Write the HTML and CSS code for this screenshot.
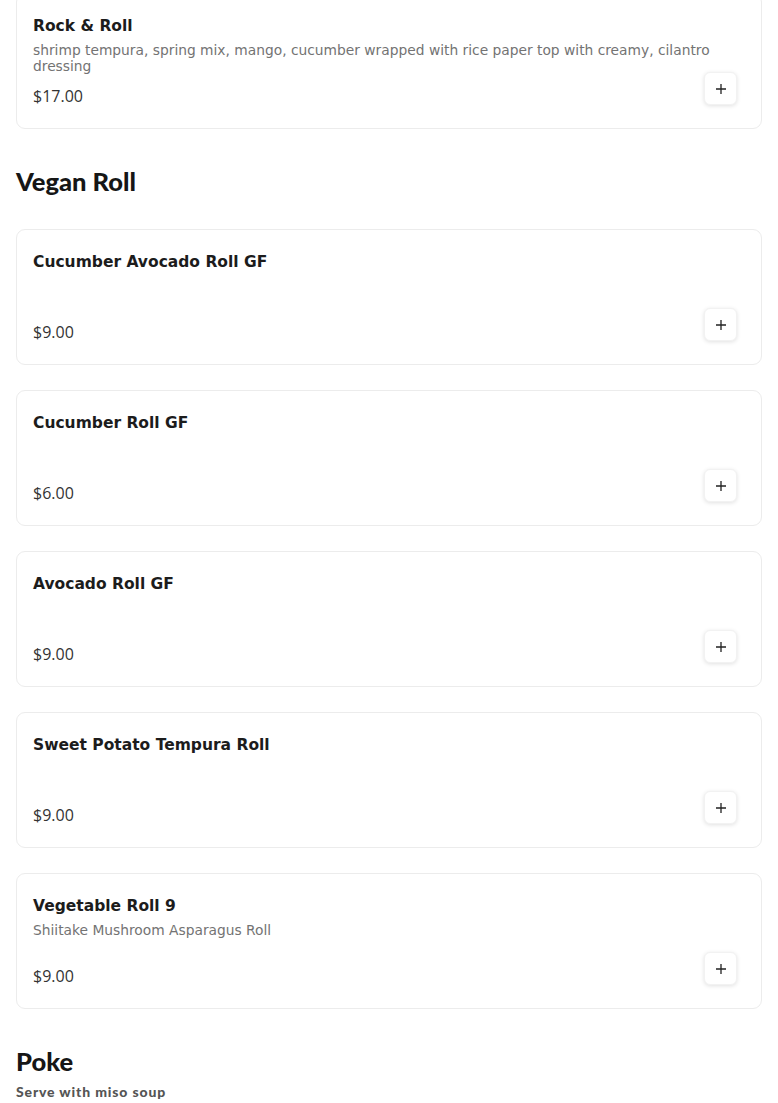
FILE: index.html
```html
<!DOCTYPE html>
<html lang="en">
<head>
<meta charset="utf-8">
<title>Menu</title>
<link rel="stylesheet" href="styles.css">
</head>
<body>
<main class="menu">
  <section class="section section-first">
    <div class="items">
      <article class="card">
        <h3 class="item-name">Rock &amp; Roll</h3>
        <p class="item-desc">shrimp tempura, spring mix, mango, cucumber wrapped with rice paper top with creamy, cilantro dressing</p>
        <p class="item-price">$17.00</p>
        <button class="add" aria-label="Add"><svg viewBox="0 0 12 12" width="12" height="12"><path d="M6 1v10M1 6h10" stroke="#222" stroke-width="1.3" fill="none"/></svg></button>
      </article>
    </div>
  </section>

  <section class="section">
    <h2 class="section-title">Vegan Roll</h2>
    <div class="items">
      <article class="card">
        <h3 class="item-name">Cucumber Avocado Roll GF</h3>
        <p class="item-desc"></p>
        <p class="item-price">$9.00</p>
        <button class="add" aria-label="Add"><svg viewBox="0 0 12 12" width="12" height="12"><path d="M6 1v10M1 6h10" stroke="#222" stroke-width="1.3" fill="none"/></svg></button>
      </article>
      <article class="card">
        <h3 class="item-name">Cucumber Roll GF</h3>
        <p class="item-desc"></p>
        <p class="item-price">$6.00</p>
        <button class="add" aria-label="Add"><svg viewBox="0 0 12 12" width="12" height="12"><path d="M6 1v10M1 6h10" stroke="#222" stroke-width="1.3" fill="none"/></svg></button>
      </article>
      <article class="card">
        <h3 class="item-name">Avocado Roll GF</h3>
        <p class="item-desc"></p>
        <p class="item-price">$9.00</p>
        <button class="add" aria-label="Add"><svg viewBox="0 0 12 12" width="12" height="12"><path d="M6 1v10M1 6h10" stroke="#222" stroke-width="1.3" fill="none"/></svg></button>
      </article>
      <article class="card">
        <h3 class="item-name">Sweet Potato Tempura Roll</h3>
        <p class="item-desc"></p>
        <p class="item-price">$9.00</p>
        <button class="add" aria-label="Add"><svg viewBox="0 0 12 12" width="12" height="12"><path d="M6 1v10M1 6h10" stroke="#222" stroke-width="1.3" fill="none"/></svg></button>
      </article>
      <article class="card">
        <h3 class="item-name">Vegetable Roll 9</h3>
        <p class="item-desc">Shiitake Mushroom Asparagus Roll</p>
        <p class="item-price">$9.00</p>
        <button class="add" aria-label="Add"><svg viewBox="0 0 12 12" width="12" height="12"><path d="M6 1v10M1 6h10" stroke="#222" stroke-width="1.3" fill="none"/></svg></button>
      </article>
    </div>
  </section>

  <section class="section">
    <h2 class="section-title">Poke</h2>
    <p class="section-sub">Serve with miso soup</p>
  </section>
</main>
</body>
</html>
```
FILE: styles.css
```css
* { box-sizing: border-box; }
html, body { margin: 0; padding: 0; background: #fff; }
body { font-family: "DejaVu Sans", sans-serif; color: #1c1c1c; }

.menu {
  padding: 0 16px;
  margin-top: -7px;
}

.section { margin-top: 36px; }
.section-first { margin-top: 0; }

.section-title {
  margin: 0 0 32px;
  font-family: "Lato", sans-serif;
  font-weight: 900;
  font-size: 25.5px;
  line-height: 32px;
  color: #161616;
}

.section-sub {
  margin: -27px 0 0;
  font-family: "Lato", sans-serif;
  font-weight: 900;
  font-size: 14px;
  line-height: 20px;
  letter-spacing: 0.85px;
  color: #555;
}

.items {
  display: flex;
  flex-direction: column;
  gap: 25px;
}

.card {
  position: relative;
  display: flex;
  flex-direction: column;
  height: 136px;
  padding: 20px 24px 18px 16px;
  border: 1px solid #ececec;
  border-radius: 9px;
  background: #fff;
}

.item-name {
  margin: 0;
  font-size: 15.5px;
  font-weight: 700;
  line-height: 24px;
  color: #1c1c1c;
}

.item-desc {
  margin: 4px 0 0;
  min-height: 32px;
  font-size: 13.8px;
  line-height: 16px;
  color: #737373;
}

.item-price {
  margin: 10px 0 0;
  font-family: "Open Sans", sans-serif;
  font-size: 16px;
  line-height: 24px;
  color: #333;
}

.add {
  position: absolute;
  right: 24px;
  bottom: 23px;
  width: 33px;
  height: 33px;
  padding: 0;
  display: flex;
  align-items: center;
  justify-content: center;
  border: 1px solid #f2f2f2;
  border-radius: 6px;
  background: #fff;
  box-shadow: 0 1px 4px rgba(0, 0, 0, 0.12);
  cursor: pointer;
}
```
